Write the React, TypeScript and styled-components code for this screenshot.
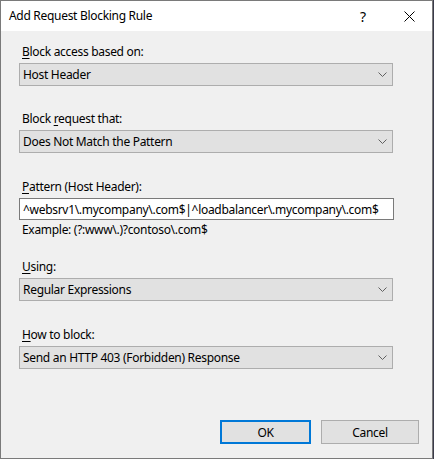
import React from "react";
import styled, { createGlobalStyle } from "styled-components";

const GlobalStyle = createGlobalStyle`
  html, body {
    margin: 0;
    padding: 0;
    background: #3a3a4a;
  }
  body {
    font-family: "Noto Sans", "Open Sans", sans-serif;
    font-size: 12px;
    letter-spacing: -0.3px;
    color: #000;
  }
`;

const Window = styled.div`
  width: 433px;
  height: 459px;
  box-sizing: border-box;
  border: 1px solid #7a7a7a;
  background: #f0f0f0;
  display: flex;
  flex-direction: column;
`;

const TitleBar = styled.div`
  height: 30px;
  background: #fff;
  display: flex;
  align-items: center;
  padding-left: 8px;
`;

const Title = styled.span`
  flex: 1;
  font-size: 12px;
  line-height: 16px;
`;

const TitleButton = styled.button`
  width: 46px;
  height: 30px;
  border: 0;
  padding: 0;
  background: transparent;
  display: flex;
  align-items: center;
  justify-content: center;
  font-family: inherit;
  font-size: 14px;
  color: #000;
`;

const Body = styled.div`
  flex: 1;
  display: flex;
  flex-direction: column;
  padding: 13px 13px 14px 18px;
`;

const Field = styled.div<{ $top: number }>`
  display: flex;
  flex-direction: column;
  margin-top: ${(p) => p.$top}px;
`;

const Label = styled.label`
  display: block;
  height: 16px;
  line-height: 16px;
  padding-left: 3px;
  margin-bottom: 3px;
  white-space: nowrap;

  u {
    text-decoration: underline;
    text-underline-offset: 2px;
  }
`;

const Select = styled.div`
  width: 374px;
  height: 23px;
  box-sizing: border-box;
  border: 1px solid #adadad;
  background: #e1e1e1;
  display: flex;
  align-items: center;
  justify-content: space-between;
  padding: 0 5px 0 3px;
  white-space: nowrap;
`;

const TextBox = styled.div`
  width: 375px;
  height: 22px;
  box-sizing: border-box;
  border: 1px solid #7a7a7a;
  background: #fff;
  display: flex;
  align-items: center;
  padding: 0 3px;
  white-space: nowrap;
  overflow: hidden;
`;

const Hint = styled.div`
  height: 16px;
  line-height: 16px;
  padding-left: 3px;
  margin-top: 2px;
`;

const Footer = styled.div`
  margin-top: auto;
  display: flex;
  justify-content: flex-end;
  gap: 10px;
`;

const Button = styled.button<{ $primary?: boolean; $width: number }>`
  width: ${(p) => p.$width}px;
  height: 24px;
  box-sizing: border-box;
  border: ${(p) => (p.$primary ? "2px solid #0078d7" : "1px solid #adadad")};
  background: #e1e1e1;
  font-family: inherit;
  font-size: 12px;
  letter-spacing: inherit;
  color: #000;
  padding: 0;
`;

const Chevron = () => (
  <svg width="9" height="5" viewBox="0 0 9 5">
    <path d="M0.5 0.5 L4.5 4.5 L8.5 0.5" fill="none" stroke="#606060" strokeWidth="1" />
  </svg>
);

const CloseIcon = () => (
  <svg width="11" height="11" viewBox="0 0 11 11">
    <path d="M0.5 0.5 L10.5 10.5 M10.5 0.5 L0.5 10.5" fill="none" stroke="#000" strokeWidth="1" />
  </svg>
);

interface DropdownProps {
  value: string;
}

function Dropdown({ value }: DropdownProps) {
  return (
    <Select>
      <span>{value}</span>
      <Chevron />
    </Select>
  );
}

export default function App() {
  return (
    <>
      <GlobalStyle />
      <Window>
        <TitleBar>
          <Title>Add Request Blocking Rule</Title>
          <TitleButton>?</TitleButton>
          <TitleButton>
            <CloseIcon />
          </TitleButton>
        </TitleBar>
        <Body>
          <Field $top={0}>
            <Label>
              <u>B</u>lock access based on:
            </Label>
            <Dropdown value="Host Header" />
          </Field>
          <Field $top={25}>
            <Label>
              Block <u>r</u>equest that:
            </Label>
            <Dropdown value="Does Not Match the Pattern" />
          </Field>
          <Field $top={26}>
            <Label>
              <u>P</u>attern (Host Header):
            </Label>
            <TextBox>^websrv1\.mycompany\.com$|^loadbalancer\.mycompany\.com$</TextBox>
            <Hint>Example: (?:www\.)?contoso\.com$</Hint>
          </Field>
          <Field $top={21}>
            <Label>
              <u>U</u>sing:
            </Label>
            <Dropdown value="Regular Expressions" />
          </Field>
          <Field $top={26}>
            <Label>
              <u>H</u>ow to block:
            </Label>
            <Dropdown value="Send an HTTP 403 (Forbidden) Response" />
          </Field>
          <Footer>
            <Button $primary $width={91}>OK</Button>
            <Button $width={98}>Cancel</Button>
          </Footer>
        </Body>
      </Window>
    </>
  );
}
